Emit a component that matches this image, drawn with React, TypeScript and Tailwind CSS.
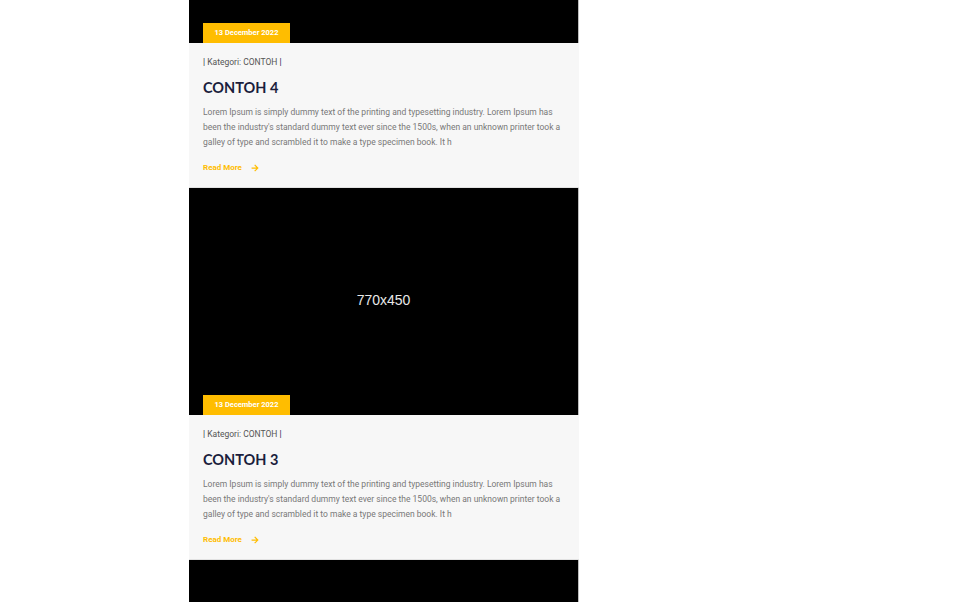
import React from 'react';
import { FaArrowRight } from 'react-icons/fa';

type Post = {
    title: string;
    date: string;
    category: string;
};

const posts: Post[] = [
    { title: 'CONTOH 4', date: '13 December 2022', category: 'CONTOH' },
    { title: 'CONTOH 3', date: '13 December 2022', category: 'CONTOH' },
    { title: 'CONTOH 2', date: '13 December 2022', category: 'CONTOH' },
];

const PostCard: React.FC<{ post: Post }> = ({ post }) => {
    return (
        <div>
            <div className="relative h-[227px] bg-black border-r border-[#bdbdbd] flex items-center justify-center">
                <span className="text-[#e8e8e8] text-[14px] -mt-[2px]" style={{ fontFamily: '"Liberation Sans", Arial, sans-serif' }}>
                    770x450
                </span>
                <div className="absolute left-[14px] bottom-0 h-[20px] w-[87px] bg-[#ffbd00] flex items-center justify-center">
                    <span className="text-white text-[7.5px] font-bold">{post.date}</span>
                </div>
            </div>
            <div className="bg-[#f7f7f7] px-[14px] pt-[13px] pb-[13px] border-b border-[#e2e2e2]">
                <div className="text-[8.5px] leading-[12px] text-[#555]">
                    <span className="text-[#1b1e3d]">|</span> Kategori: {post.category} <span className="text-[#1b1e3d]">|</span>
                </div>
                <h2
                    className="mt-[11px] text-[14.5px] leading-[18px] font-bold text-[#1b1e3d]"
                    style={{ fontFamily: 'Lato, "Noto Sans", sans-serif' }}
                >
                    {post.title}
                </h2>
                <p className="mt-[8px] text-[8.5px] leading-[15px] text-[#777]">
                    Lorem Ipsum is simply dummy text of the printing and typesetting industry. Lorem Ipsum has
                    <br />
                    been the industry's standard dummy text ever since the 1500s, when an unknown printer took a
                    <br />
                    galley of type and scrambled it to make a type specimen book. It h
                </p>
                <div className="mt-[12px] flex items-center text-[#ffbd00] text-[8px] leading-[12px] font-bold">
                    <span>Read More</span>
                    <FaArrowRight className="ml-[9px] w-[8px] h-[8px]" />
                </div>
            </div>
        </div>
    );
};

const App: React.FC = () => {
    return (
        <div className="w-[970px] h-[602px] overflow-hidden bg-white" style={{ fontFamily: 'Roboto, "Noto Sans", sans-serif' }}>
            <div className="ml-[189px] w-[390px] mt-[-184px]">
                {posts.map((post) => (
                    <PostCard key={post.title} post={post} />
                ))}
            </div>
        </div>
    );
};

export default App;
